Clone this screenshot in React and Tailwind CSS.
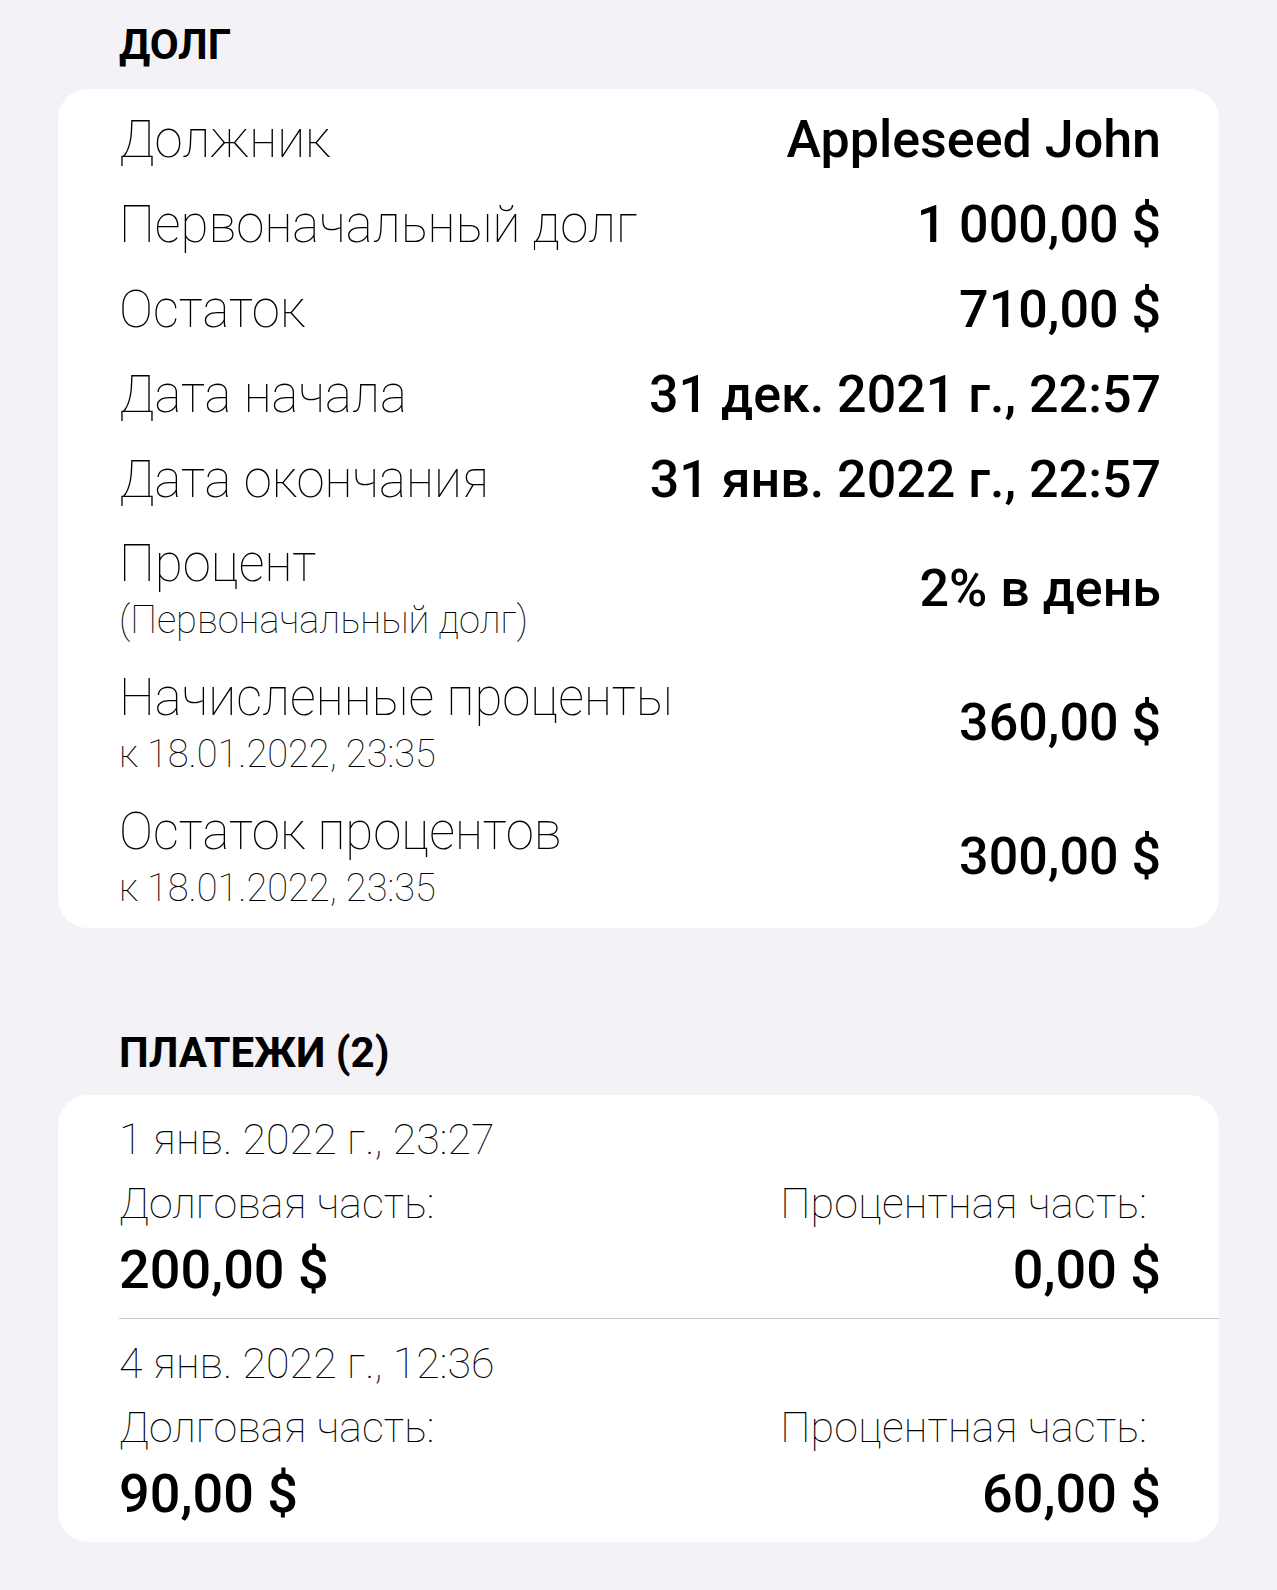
const DEBT_ROWS = [
  { label: 'Должник', value: 'Appleseed John' },
  { label: 'Первоначальный долг', value: '1 000,00 $' },
  { label: 'Остаток', value: '710,00 $' },
  { label: 'Дата начала', value: '31 дек. 2021 г., 22:57' },
  { label: 'Дата окончания', value: '31 янв. 2022 г., 22:57' },
  { label: 'Процент', sub: '(Первоначальный долг)', value: '2% в день' },
  { label: 'Начисленные проценты', sub: 'к 18.01.2022, 23:35', value: '360,00 $' },
  { label: 'Остаток процентов', sub: 'к 18.01.2022, 23:35', value: '300,00 $' },
];

const PAYMENTS = [
  { date: '1 янв. 2022 г., 23:27', debt: '200,00 $', interest: '0,00 $' },
  { date: '4 янв. 2022 г., 12:36', debt: '90,00 $', interest: '60,00 $' },
];

const SectionTitle = ({ children, className = '' }) => (
  <div className={`px-[119px] text-[42px] leading-[42px] font-bold text-black ${className}`}>
    {children}
  </div>
);

const DebtRow = ({ row }) => (
  <div
    className={`flex items-center justify-between ${row.sub ? 'h-[134px]' : 'h-[85px]'}`}
  >
    <div className="flex flex-col">
      <span className="text-[51px] leading-[62px] font-thin text-black">{row.label}</span>
      {row.sub && (
        <span className="text-[38px] leading-[50px] font-thin text-black">{row.sub}</span>
      )}
    </div>
    <span className="text-[52px] leading-[62px] font-medium text-black whitespace-nowrap">
      {row.value}
    </span>
  </div>
);

const PaymentItem = ({ payment, last }) => (
  <div className={`pt-[12px] pb-[13px] pr-[58px] ${last ? '' : 'border-b border-[#c6c6c8]'}`}>
    <div className="text-[43px] leading-[64px] font-thin text-black">{payment.date}</div>
    <div className="flex justify-between">
      <div className="flex flex-col">
        <span className="text-[43px] leading-[64px] font-thin text-black">Долговая часть:</span>
        <span className="text-[54px] leading-[70px] font-medium text-black">{payment.debt}</span>
      </div>
      <div className="flex flex-col items-end">
        <span className="text-[43px] leading-[64px] font-thin text-black mr-[14px] tracking-[0.2px]">
          Процентная часть:
        </span>
        <span className="text-[54px] leading-[70px] font-medium text-black">{payment.interest}</span>
      </div>
    </div>
  </div>
);

export default function App() {
  return (
    <div className="min-h-screen bg-[#f2f2f7] font-['Roboto','Noto_Sans',sans-serif] pb-[50px]">
      {/* Debt */}
      <SectionTitle className="pt-[24px] pb-[23px]">ДОЛГ</SectionTitle>
      <div className="mx-[58px] bg-white rounded-[30px] pl-[61px] pr-[58px] pt-[8px] pb-[4px]">
        {DEBT_ROWS.map((row) => (
          <DebtRow key={row.label} row={row} />
        ))}
      </div>

      {/* Payments */}
      <SectionTitle className="mt-[104px] pb-[21px]">ПЛАТЕЖИ (2)</SectionTitle>
      <div className="mx-[58px] bg-white rounded-[30px] pl-[61px]">
        {PAYMENTS.map((p, i) => (
          <PaymentItem key={p.date} payment={p} last={i === PAYMENTS.length - 1} />
        ))}
      </div>
    </div>
  );
}
